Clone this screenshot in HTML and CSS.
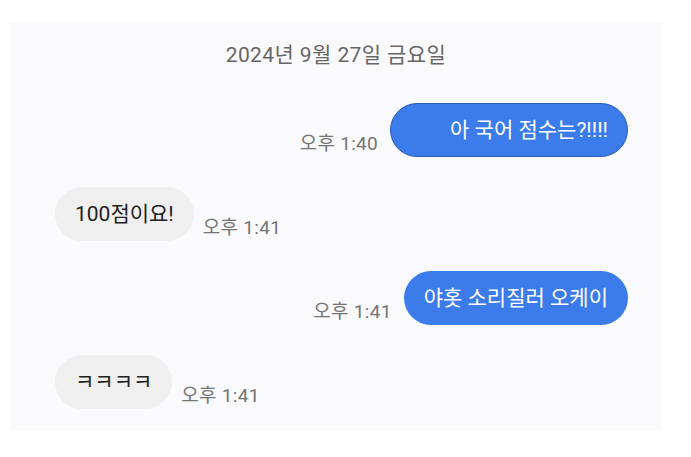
FILE: index.html
```html
<!DOCTYPE html>
<html lang="ko">
<head>
    <meta charset="UTF-8">
    <meta name="viewport" content="width=device-width, initial-scale=1.0">
    <title>대화</title>
    <link rel="stylesheet" href="styles.css">
</head>
<body>

    <div class="chat">
        <div class="date">2024년 9월 27일 금요일</div>

        <div class="row out">
            <span class="time">오후 1:40</span>
            <div class="bubble blue first">아 국어 점수는?!!!!</div>
        </div>

        <div class="row in">
            <div class="bubble grey">100점이요!</div>
            <span class="time">오후 1:41</span>
        </div>

        <div class="row out">
            <span class="time">오후 1:41</span>
            <div class="bubble blue">야홋 소리질러 오케이</div>
        </div>

        <div class="row in">
            <div class="bubble grey">ㅋㅋㅋㅋ</div>
            <span class="time">오후 1:41</span>
        </div>
    </div>

</body>
</html>
```

FILE: styles.css
```css
body {
    margin: 0;
    background-color: #fff;
    font-family: Roboto, "Noto Sans CJK KR", sans-serif;
}

.chat {
    width: 652px;
    height: 407px;
    margin: 23px 0 0 10px;
    padding-top: 20px;
    box-sizing: border-box;
    background-color: #fafafc;
}

.date {
    text-align: center;
    font-size: 21px;
    line-height: 24px;
    color: #666;
    letter-spacing: 0.4px;
    margin-bottom: 36px;
}

.row {
    display: flex;
    align-items: flex-end;
    margin-bottom: 30px;
}

.row.out {
    justify-content: flex-end;
    padding-right: 34px;
}

.row.out .time {
    margin-right: 12px;
}

.row.in {
    padding-left: 45px;
}

.row.in .time {
    margin-left: 9px;
}

.time {
    font-size: 19px;
    line-height: 22px;
    color: #747474;
    letter-spacing: 0.3px;
    margin-bottom: 2px;
}

.bubble {
    font-size: 21px;
    line-height: 24px;
    padding: 15px 20px;
    border-radius: 27px;
}

.blue {
    background-color: #3b7cea;
    color: #fff;
}

/* first outgoing message has a darker edge and wider left side */
.blue.first {
    padding: 14px 19px 14px 59px;
    border: 1px solid #2b5fb3;
}

.grey {
    background-color: #efefef;
    color: #222;
}
```
